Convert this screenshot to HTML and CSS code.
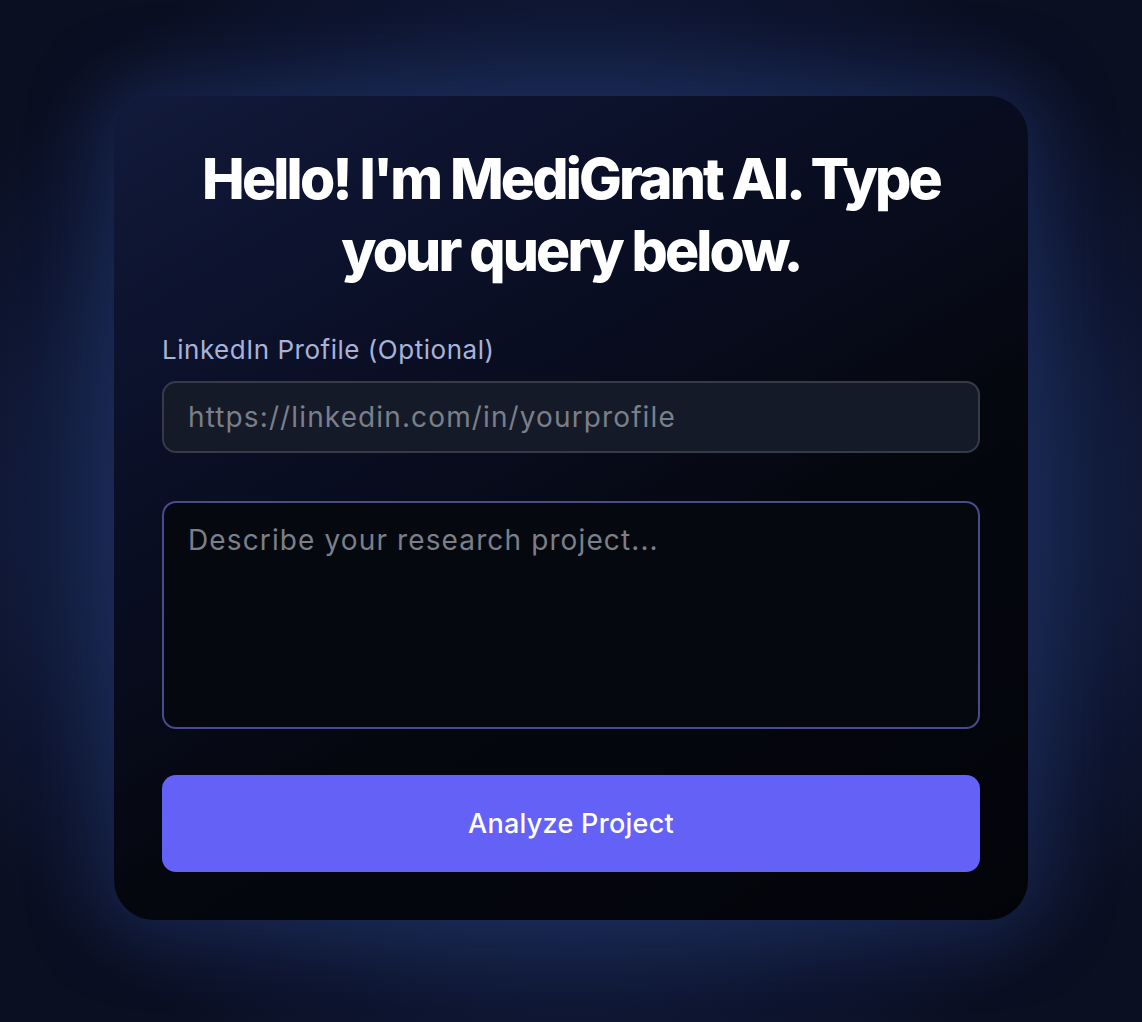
FILE: index.html
```html
<!DOCTYPE html>
<html lang="en">
<head>
<meta charset="utf-8">
<title>MediGrant AI</title>
<link rel="stylesheet" href="styles.css">
</head>
<body>
<main class="stage">
  <section class="card">
    <h1 class="title">Hello! I'm MediGrant AI. Type your query below.</h1>
    <label class="label" for="li">LinkedIn Profile (Optional)</label>
    <input id="li" class="field input" type="text" placeholder="https://linkedin.com/in/yourprofile">
    <textarea class="field area" placeholder="Describe your research project..."></textarea>
    <button class="btn" type="button">Analyze Project</button>
  </section>
</main>
</body>
</html>
```

FILE: styles.css
```css
html, body {
  margin: 0;
  padding: 0;
  height: 100%;
}
body {
  background: #0a0f22;
  font-family: "Inter", "Noto Sans", "Liberation Sans", sans-serif;
  overflow: hidden;
}
.stage {
  height: 1022px;
  display: flex;
  align-items: center;
  justify-content: center;
  background: radial-gradient(ellipse 62% 60% at 50% 50%, #1f3160 0%, #1a2a55 55%, #0e1530 85%, #0a0f22 100%);
}
.card {
  box-sizing: border-box;
  width: 914px;
  height: 824px;
  margin-top: -6px;
  padding: 47px 48px 48px;
  border-radius: 40px;
  background: linear-gradient(150deg, #121a3b 0%, #0a0f26 30%, #05070f 60%, #03040a 100%);
  box-shadow: 0 0 70px 10px rgba(32, 52, 105, 0.55);
  display: flex;
  flex-direction: column;
}
.title {
  margin: 0 20px 47px;
  color: #ffffff;
  font-family: "Inter", "Liberation Sans", sans-serif;
  font-weight: 800;
  font-size: 57px;
  line-height: 72px;
  letter-spacing: -0.05em;
  text-align: center;
}
.label {
  display: block;
  color: #a9b2d8;
  font-size: 26px;
  line-height: 32px;
  letter-spacing: 0.02em;
  margin-bottom: 15px;
}
.field {
  box-sizing: border-box;
  width: 100%;
  font-family: "Inter", "Noto Sans", "Liberation Sans", sans-serif;
  font-size: 28px;
  letter-spacing: 0.04em;
  color: #e5e7eb;
  border-radius: 14px;
  outline: none;
}
.field::placeholder {
  color: #7b7f89;
  opacity: 1;
}
.input {
  height: 72px;
  padding: 0 24px;
  background: #151a28;
  border: 2px solid #373b48;
  margin-bottom: 48px;
}
.area {
  height: 228px;
  padding: 19px 24px;
  background: #06080f;
  border: 2px solid #4a4a8e;
  resize: none;
  margin-bottom: 46px;
  line-height: 36px;
}
.btn {
  height: 97px;
  width: 100%;
  border: none;
  border-radius: 14px;
  background: #6461f6;
  color: #ffffff;
  font-family: "Inter", "Noto Sans", "Liberation Sans", sans-serif;
  font-size: 27px;
  font-weight: 500;
  letter-spacing: 0.01em;
  cursor: pointer;
}
```
